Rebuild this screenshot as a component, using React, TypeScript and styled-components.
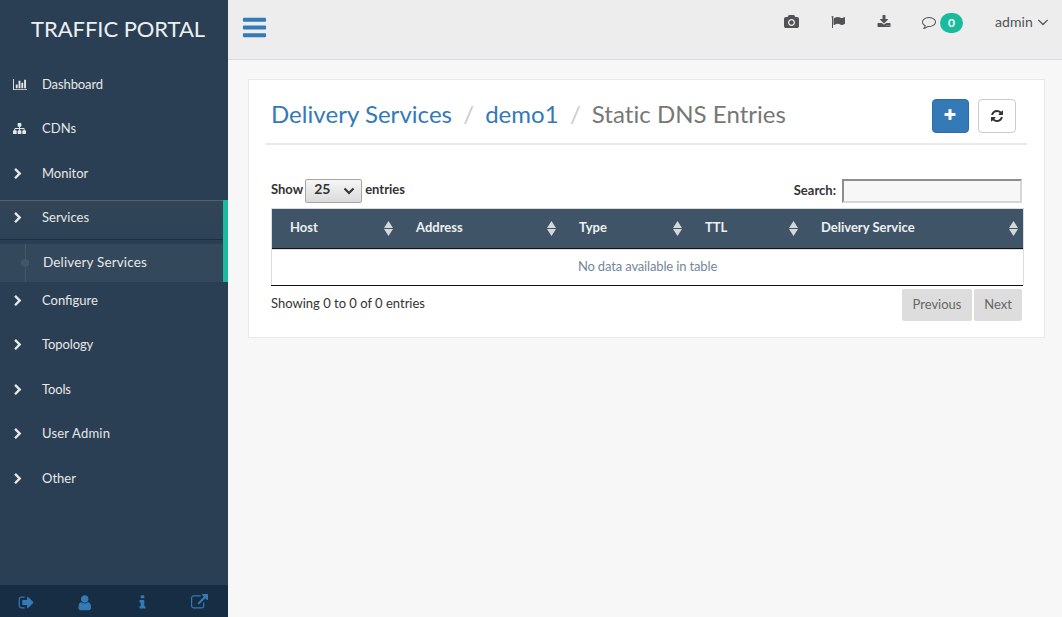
import React from "react";
import styled, { createGlobalStyle, css } from "styled-components";

const GlobalStyle = createGlobalStyle`
  * { box-sizing: border-box; }
  body {
    margin: 0;
    background: #f7f7f7;
    color: #333;
    font: 400 13px/18.57px Lato, "Liberation Sans", sans-serif;
    overflow: hidden;
  }
`;

const glyphs = {
  chart: { w: 2048, d: "M640 896v512h-256v-512h256zm384-512v1024h-256v-1024h256zm1024 1152v128h-2048v-1536h128v1408h1920zm-640-896v768h-256v-768h256zm384-384v1152h-256v-1152h256z" },
  sitemap: { w: 1792, d: "M1792 1248v320q0 40-28 68t-68 28h-320q-40 0-68-28t-28-68v-320q0-40 28-68t68-28h96v-192h-512v192h96q40 0 68 28t28 68v320q0 40-28 68t-68 28h-320q-40 0-68-28t-28-68v-320q0-40 28-68t68-28h96v-192h-512v192h96q40 0 68 28t28 68v320q0 40-28 68t-68 28h-320q-40 0-68-28t-28-68v-320q0-40 28-68t68-28h96v-192q0-52 38-90t90-38h512v-192h-96q-40 0-68-28t-28-68v-320q0-40 28-68t68-28h320q40 0 68 28t28 68v320q0 40-28 68t-68 28h-96v192h512q52 0 90 38t38 90v192h96q40 0 68 28t28 68z" },
  chevron: { w: 1792, d: "M1363 877l-742 742q-19 19-45 19t-45-19l-166-166q-19-19-19-45t19-45l531-531-531-531q-19-19-19-45t19-45l166-166q19-19 45-19t45 19l742 742q19 19 19 45t-19 45z" },
  bars: { w: 1792, d: "M1664 1344v128q0 26-19 45t-45 19h-1408q-26 0-45-19t-19-45v-128q0-26 19-45t45-19h1408q26 0 45 19t19 45zm0-512v128q0 26-19 45t-45 19h-1408q-26 0-45-19t-19-45v-128q0-26 19-45t45-19h1408q26 0 45 19t19 45zm0-512v128q0 26-19 45t-45 19h-1408q-26 0-45-19t-19-45v-128q0-26 19-45t45-19h1408q26 0 45 19t19 45z" },
  camera: { w: 1920, d: "M960 672q119 0 203.5 84.5t84.5 203.5-84.5 203.5-203.5 84.5-203.5-84.5-84.5-203.5 84.5-203.5 203.5-84.5zm704-416q106 0 181 75t75 181v896q0 106-75 181t-181 75h-1408q-106 0-181-75t-75-181v-896q0-106 75-181t181-75h224l51-136q19-49 69.5-84.5t103.5-35.5h512q53 0 103.5 35.5t69.5 84.5l51 136h224zm-704 1152q185 0 316.5-131.5t131.5-316.5-131.5-316.5-316.5-131.5-316.5 131.5-131.5 316.5 131.5 316.5 316.5 131.5z" },
  flag: { w: 1792, d: "M320 256q0 72-64 110v1266q0 13-9.5 22.5t-22.5 9.5h-64q-13 0-22.5-9.5t-9.5-22.5v-1266q-64-38-64-110 0-53 37.5-90.5t90.5-37.5 90.5 37.5 37.5 90.5zm1472 64v763q0 25-12.5 38.5t-39.5 27.5q-215 116-369 116-61 0-123.5-22t-108.5-48-115.5-48-142.5-22q-192 0-464 146-17 9-33 9-26 0-45-19t-19-45v-742q0-32 31-55 21-14 79-43 236-120 421-120 107 0 200 29t219 88q38 19 88 19 54 0 117.5-21t110-47 88-47 54.5-21q26 0 45 19t19 45z" },
  download: { w: 1792, d: "M1344 1344q0-26-19-45t-45-19-45 19-19 45 19 45 45 19 45-19 19-45zm256 0q0-26-19-45t-45-19-45 19-19 45 19 45 45 19 45-19 19-45zm128-224v320q0 40-28 68t-68 28h-1472q-40 0-68-28t-28-68v-320q0-40 28-68t68-28h465l135 136q58 56 136 56t136-56l136-136h464q40 0 68 28t28 68zm-325-569q17 41-14 70l-448 448q-18 19-45 19t-45-19l-448-448q-31-29-14-70 17-39 59-39h256v-448q0-26 19-45t45-19h256q26 0 45 19t19 45v448h256q42 0 59 39z" },
  comment: { w: 1792, d: "M896 384q-204 0-381.5 69.5t-282 187.5-104.5 255q0 112 71.5 213.5t201.5 175.5l87 50-27 96q-24 91-70 172 152-63 275-171l43-38 57 6q69 8 130 8 204 0 381.5-69.5t282-187.5 104.5-255-104.5-255-282-187.5-381.5-69.5zm896 512q0 174-120 321.5t-326 233-450 85.5q-70 0-145-8-198 175-460 242-49 14-114 22h-5q-15 0-27-10.5t-16-27.5v-1q-3-4-.5-12t2-10 4.5-9.5l6-9 7-8.5 8-9q7-8 31-34.5t34.5-38 31-39.5 32.5-51 27-59 26-76q-157-89-247.5-220t-90.5-281q0-174 120-321.5t326-233 450-85.5 450 85.5 326 233 120 321.5z" },
  angle: { w: 1792, d: "M1395 736q0 13-10 23l-466 466q-10 10-23 10t-23-10l-466-466q-10-10-10-23t10-23l50-50q10-10 23-10t23 10l393 393 393-393q10-10 23-10t23 10l50 50q10 10 10 23z" },
  plus: { w: 1792, d: "M1600 736v192q0 40-28 68t-68 28h-416v416q0 40-28 68t-68 28h-192q-40 0-68-28t-28-68v-416h-416q-40 0-68-28t-28-68v-192q0-40 28-68t68-28h416v-416q0-40 28-68t68-28h192q40 0 68 28t28 68v416h416q40 0 68 28t28 68z" },
  refresh: { w: 1792, d: "M1639 1056q0 5-1 7-64 268-268 434.5t-478 166.5q-146 0-282.5-55t-243.5-157l-129 129q-19 19-45 19t-45-19-19-45v-448q0-26 19-45t45-19h448q26 0 45 19t19 45-19 45l-137 137q71 66 161 102t187 36q134 0 250-65t186-179q11-17 53-117 8-23 30-23h192q13 0 22.5 9.5t9.5 22.5zm25-800v448q0 26-19 45t-45 19h-448q-26 0-45-19t-19-45 19-45l138-138q-148-137-349-137-134 0-250 65t-186 179q-11 17-53 117-8 23-30 23h-199q-13 0-22.5-9.5t-9.5-22.5v-7q65-268 270-434.5t480-166.5q146 0 284 55.5t245 156.5l130-129q19-19 45-19t45 19 19 45z" },
  signOut: { w: 1664, d: "M704 1440q0 4 1 20t.5 26.5-3 23.5-10 19.5-20.5 6.5h-320q-119 0-203.5-84.5t-84.5-203.5v-704q0-119 84.5-203.5t203.5-84.5h320q13 0 22.5 9.5t9.5 22.5q0 4 1 20t.5 26.5-3 23.5-10 19.5-20.5 6.5h-320q-66 0-113 47t-47 113v704q0 66 47 113t113 47h312l11.5 1 11.5 3 8 5.5 7 9 2 13.5zm928-544q0 26-19 45l-544 544q-19 19-45 19t-45-19-19-45v-288h-448q-26 0-45-19t-19-45v-384q0-26 19-45t45-19h448v-288q0-26 19-45t45-19 45 19l544 544q19 19 19 45z" },
  user: { w: 1792, d: "M1536 1399q0 109-62.5 187t-150.5 78h-854q-88 0-150.5-78t-62.5-187q0-85 8.5-160.5t31.5-152 58.5-131 94-89 134.5-34.5q131 128 313 128t313-128q76 0 134.5 34.5t94 89 58.5 131 31.5 152 8.5 160.5zm-256-887q0 159-112.5 271.5t-271.5 112.5-271.5-112.5-112.5-271.5 112.5-271.5 271.5-112.5 271.5 112.5 112.5 271.5z" },
  info: { w: 1792, d: "M1216 1344v128q0 26-19 45t-45 19h-512q-26 0-45-19t-19-45v-128q0-26 19-45t45-19h64v-384h-64q-26 0-45-19t-19-45v-128q0-26 19-45t45-19h384q26 0 45 19t19 45v576h64q26 0 45 19t19 45zm-128-1152v192q0 26-19 45t-45 19h-256q-26 0-45-19t-19-45v-192q0-26 19-45t45-19h256q26 0 45 19t19 45z" },
  external: { w: 1792, d: "M1408 928v320q0 119-84.5 203.5t-203.5 84.5h-832q-119 0-203.5-84.5t-84.5-203.5v-832q0-119 84.5-203.5t203.5-84.5h704q14 0 23 9t9 23v64q0 14-9 23t-23 9h-704q-66 0-113 47t-47 113v832q0 66 47 113t113 47h832q66 0 113-47t47-113v-320q0-14 9-23t23-9h64q14 0 23 9t9 23zm384-864v512q0 26-19 45t-45 19-45-19l-176-176-652 652q-10 10-23 10t-23-10l-114-114q-10-10-10-23t10-23l652-652-176-176q-19-19-19-45t19-45 45-19h512q26 0 45 19t19 45z" },
};

type GlyphName = keyof typeof glyphs;

const Svg = styled.svg`
  display: block;
  flex: none;
  fill: currentColor;
`;

function Icon({ name, size }: { name: GlyphName; size: number }) {
  const { w, d } = glyphs[name];
  return (
    <Svg width={(size * w) / 1792} height={size} viewBox={`0 0 ${w} 1792`}>
      <path d={d} />
    </Svg>
  );
}

const Page = styled.div`
  display: grid;
  grid-template-columns: 228px 1fr;
  height: 617px;
`;

const Sidebar = styled.aside`
  display: flex;
  flex-direction: column;
  background: #2a3f54;
  color: #e7e7e7;
`;

const Brand = styled.div`
  height: 66.3px;
  padding-left: 31px;
  color: #ecf0f1;
  font-size: 22px;
  line-height: 57px;
  letter-spacing: -0.05px;
  white-space: nowrap;
`;

const Menu = styled.nav`
  flex: 1;
`;

const MenuGroup = styled.div<{ $active?: boolean }>`
  ${(p) => p.$active && css`border-right: 5px solid #1abb9c;`}
`;

const MenuLink = styled.a<{ $active?: boolean }>`
  display: flex;
  align-items: center;
  height: 38.57px;
  margin-bottom: 6px;
  padding-bottom: 3px;
  ${(p) =>
    p.$active &&
    css`
      background: linear-gradient(#334556, #2c4257);
      box-shadow: rgba(0, 0, 0, 0.25) 0 1px 0, inset rgba(255, 255, 255, 0.16) 0 1px 0;
    `}
`;

const MenuIcon = styled.span<{ $wide: boolean }>`
  width: 42px;
  padding: ${(p) => (p.$wide ? 0.4 : 1)}px 0 0 ${(p) => (p.$wide ? 12.6 : 11.6)}px;
`;

const MenuLabel = styled.span<{ $spacing?: number }>`
  letter-spacing: ${(p) => p.$spacing ?? 0}px;
`;

const SubMenu = styled.div`
  display: flex;
  align-items: center;
  height: 38.3px;
  margin-top: -0.6px;
  background: rgba(255, 255, 255, 0.05);
`;

const SubMarker = styled.span`
  display: flex;
  align-items: center;
  justify-content: center;
  width: 8px;
  height: 100%;
  margin: 0 14px 0 21px;
  background: linear-gradient(90deg, transparent 4px, #425668 4px, #425668 5px, transparent 5px);

  &::before {
    content: "";
    width: 8px;
    height: 8px;
    border-radius: 50%;
    background: #425668;
  }
`;

const SubLabel = styled.span`
  padding-bottom: 2px;
  font-size: 13.5px;
  letter-spacing: 0.15px;
`;

const SidebarFooter = styled.div`
  display: grid;
  grid-template-columns: 52px 65px 50px 65px;
  height: 32px;
  padding-top: 3px;
  background: #172d44;
  color: #337ab7;
`;

const FooterButton = styled.a`
  display: flex;
  align-items: center;
  justify-content: center;
`;

const Content = styled.div`
  min-width: 0;
`;

const TopBar = styled.header`
  display: flex;
  justify-content: space-between;
  height: 60px;
  padding: 0 10px 0 13px;
  background: #ededed;
  border-bottom: 1px solid #d9dee4;
`;

const MenuToggle = styled.a`
  padding-top: 14.3px;
  color: #337ab7;
`;

const Tools = styled.div`
  display: flex;
  align-items: center;
  height: 44px;
  color: #515356;
`;

const Tool = styled.a<{ $gap: number }>`
  display: flex;
  align-items: center;
  margin-left: ${(p) => p.$gap}px;
`;

const Badge = styled.span`
  width: 23px;
  height: 20px;
  margin: 2px 0 0 4px;
  border-radius: 10px;
  background: #1abb9c;
  color: #fff;
  font-weight: 700;
  font-size: 12px;
  line-height: 20px;
  text-align: center;
`;

const UserName = styled.span`
  margin: 1px 1px 0 0;
  font-size: 14px;
  letter-spacing: 0.1px;
`;

const Panel = styled.section`
  width: 797px;
  height: 259px;
  margin: 19px 0 0 20px;
  padding: 0 17px;
  background: #fff;
  border: 1px solid #e6e9ed;
`;

const PanelTitle = styled.div`
  display: flex;
  justify-content: space-between;
  height: 65px;
  padding: 19px 11px 0 5px;
  border-bottom: 2px solid #e6e9ed;
`;

const Breadcrumb = styled.ol`
  display: flex;
  margin: 0;
  padding: 0;
  list-style: none;
  font-size: 24px;
  line-height: 30px;
  letter-spacing: 0.04px;
  white-space: nowrap;
`;

const Crumb = styled.li<{ $current?: boolean }>`
  color: ${(p) => (p.$current ? "#777" : "#337ab7")};

  &:not(:first-child)::before {
    content: "/";
    padding: 0 11px 0 11.2px;
    color: #ccc;
  }
`;

const Actions = styled.div`
  display: flex;
  gap: 9px;
`;

const ActionButton = styled.button<{ $primary?: boolean }>`
  display: flex;
  align-items: center;
  justify-content: center;
  width: ${(p) => (p.$primary ? 37 : 38)}px;
  height: 34px;
  padding: ${(p) => (p.$primary ? "0 1px 2px 0" : "0 0 1px")};
  border: 1px solid ${(p) => (p.$primary ? "#2e6da4" : "#ccc")};
  border-radius: 4px;
  background: ${(p) => (p.$primary ? "#337ab7" : "#fff")};
  color: ${(p) => (p.$primary ? "#fff" : "#333")};
`;

const Controls = styled.div`
  display: flex;
  justify-content: space-between;
  height: 63px;
  padding: 34px 5px 0;
  font-weight: 700;
`;

const Control = styled.label`
  display: flex;
  height: 24px;
  line-height: 21px;
  white-space: nowrap;
`;

const LengthSelect = styled.span`
  display: flex;
  align-items: center;
  justify-content: space-between;
  width: 57px;
  height: 24px;
  margin: 0 3px 0 2px;
  padding: 0 6px 0 8px;
  border: 1px solid #a6a6a6;
  border-radius: 2px;
  background: linear-gradient(#f6f6f6, #dadada);
  font-size: 14px;
`;

const SelectValue = styled.span`
  height: 22px;
  line-height: 18px;
`;

const SelectArrow = styled.svg`
  width: 12px;
  height: 8px;
  fill: none;
  stroke: #333;
  stroke-width: 2;
`;

const SearchLabel = styled.span`
  line-height: 22px;
`;

const SearchInput = styled.input`
  width: 180px;
  height: 24px;
  margin: 0 0 0 6px;
  border: 2px solid;
  border-color: #8e8e8e #d6d6d6 #d6d6d6 #8e8e8e;
  background: #f7f7f7;
`;

const Table = styled.div`
  width: 753px;
  margin-left: 5px;
  border: 1px solid #ddd;
  border-bottom: 0;
`;

const HeadRow = styled.div`
  display: grid;
  grid-template-columns: 126px 163px 126px 116px 220px;
  height: 40px;
  background: #405467;
  border-bottom: 1px solid #111;
  color: #ecf0f1;
  font-weight: 700;
`;

const HeadCell = styled.div`
  display: flex;
  align-items: center;
  justify-content: space-between;
  padding: 0 5px 2px 18px;
`;

const SortIcon = styled.svg`
  width: 9px;
  height: 15px;
  margin-top: 2px;
  fill: #d5d8db;
`;

const EmptyRow = styled.div`
  height: 36px;
  border-top: 1px solid #ddd;
  color: #73879c;
  line-height: 32px;
  letter-spacing: -0.15px;
  text-align: center;
`;

const TableEnd = styled.div`
  width: 752px;
  height: 1px;
  margin-left: 5px;
  background: #111;
`;

const TableFooter = styled.div`
  display: flex;
  justify-content: space-between;
  padding: 3px 5px 0;
`;

const Summary = styled.div`
  line-height: 29px;
`;

const Pager = styled.div`
  display: flex;
  gap: 2px;
`;

const PageButton = styled.a<{ $width: number }>`
  width: ${(p) => p.$width}px;
  height: 32px;
  border-radius: 2px;
  background: #ddd;
  color: #666;
  line-height: 31px;
  text-align: center;
`;

type MenuItem = { label: string; icon: GlyphName; size: number; spacing?: number; child?: string };

const menu: MenuItem[] = [
  { label: "Dashboard", icon: "chart", size: 13, spacing: -0.1 },
  { label: "CDNs", icon: "sitemap", size: 13, spacing: 0.1 },
  { label: "Monitor", icon: "chevron", size: 12 },
  { label: "Services", icon: "chevron", size: 12, child: "Delivery Services" },
  { label: "Configure", icon: "chevron", size: 12 },
  { label: "Topology", icon: "chevron", size: 12, spacing: -0.1 },
  { label: "Tools", icon: "chevron", size: 12, spacing: -0.15 },
  { label: "User Admin", icon: "chevron", size: 12, spacing: 0.2 },
  { label: "Other", icon: "chevron", size: 12 },
];

const columns = ["Host", "Address", "Type", "TTL", "Delivery Service"];

export default function App() {
  return (
    <>
      <GlobalStyle />
      <Page>
        <Sidebar>
          <Brand>TRAFFIC PORTAL</Brand>
          <Menu>
            {menu.map((item) => (
              <MenuGroup key={item.label} $active={!!item.child}>
                <MenuLink $active={!!item.child}>
                  <MenuIcon $wide={item.icon !== "chevron"}>
                    <Icon name={item.icon} size={item.size} />
                  </MenuIcon>
                  <MenuLabel $spacing={item.spacing}>{item.label}</MenuLabel>
                </MenuLink>
                {item.child && (
                  <SubMenu>
                    <SubMarker />
                    <SubLabel>{item.child}</SubLabel>
                  </SubMenu>
                )}
              </MenuGroup>
            ))}
          </Menu>
          <SidebarFooter>
            <FooterButton><Icon name="signOut" size={17} /></FooterButton>
            <FooterButton><Icon name="user" size={17.5} /></FooterButton>
            <FooterButton><Icon name="info" size={17} /></FooterButton>
            <FooterButton><Icon name="external" size={17} /></FooterButton>
          </SidebarFooter>
        </Sidebar>
        <Content>
          <TopBar>
            <MenuToggle><Icon name="bars" size={27} /></MenuToggle>
            <Tools>
              <Tool $gap={0}><Icon name="camera" size={14} /></Tool>
              <Tool $gap={32}><Icon name="flag" size={14} /></Tool>
              <Tool $gap={32}><Icon name="download" size={14} /></Tool>
              <Tool $gap={31.3}>
                <Icon name="comment" size={14} />
                <Badge>0</Badge>
              </Tool>
              <Tool $gap={32}>
                <UserName>admin</UserName>
                <Icon name="angle" size={18} />
              </Tool>
            </Tools>
          </TopBar>
          <Panel>
            <PanelTitle>
              <Breadcrumb>
                <Crumb>Delivery Services</Crumb>
                <Crumb>demo1</Crumb>
                <Crumb $current>Static DNS Entries</Crumb>
              </Breadcrumb>
              <Actions>
                <ActionButton $primary><Icon name="plus" size={14} /></ActionButton>
                <ActionButton><Icon name="refresh" size={14} /></ActionButton>
              </Actions>
            </PanelTitle>
            <Controls>
              <Control>
                Show
                <LengthSelect>
                  <SelectValue>25</SelectValue>
                  <SelectArrow viewBox="0 0 12 8"><path d="M1.5 1.5 6 6l4.500-4.500" /></SelectArrow>
                </LengthSelect>
                entries
              </Control>
              <Control>
                <SearchLabel>Search:</SearchLabel>
                <SearchInput />
              </Control>
            </Controls>
            <Table>
              <HeadRow>
                {columns.map((column) => (
                  <HeadCell key={column}>
                    {column}
                    <SortIcon viewBox="0 0 9 15"><path d="M4.5 0 9 7H0zM0 8h9l-4.500 7z" /></SortIcon>
                  </HeadCell>
                ))}
              </HeadRow>
              <EmptyRow>No data available in table</EmptyRow>
            </Table>
            <TableEnd />
            <TableFooter>
              <Summary>Showing 0 to 0 of 0 entries</Summary>
              <Pager>
                <PageButton $width={70}>Previous</PageButton>
                <PageButton $width={48}>Next</PageButton>
              </Pager>
            </TableFooter>
          </Panel>
        </Content>
      </Page>
    </>
  );
}
